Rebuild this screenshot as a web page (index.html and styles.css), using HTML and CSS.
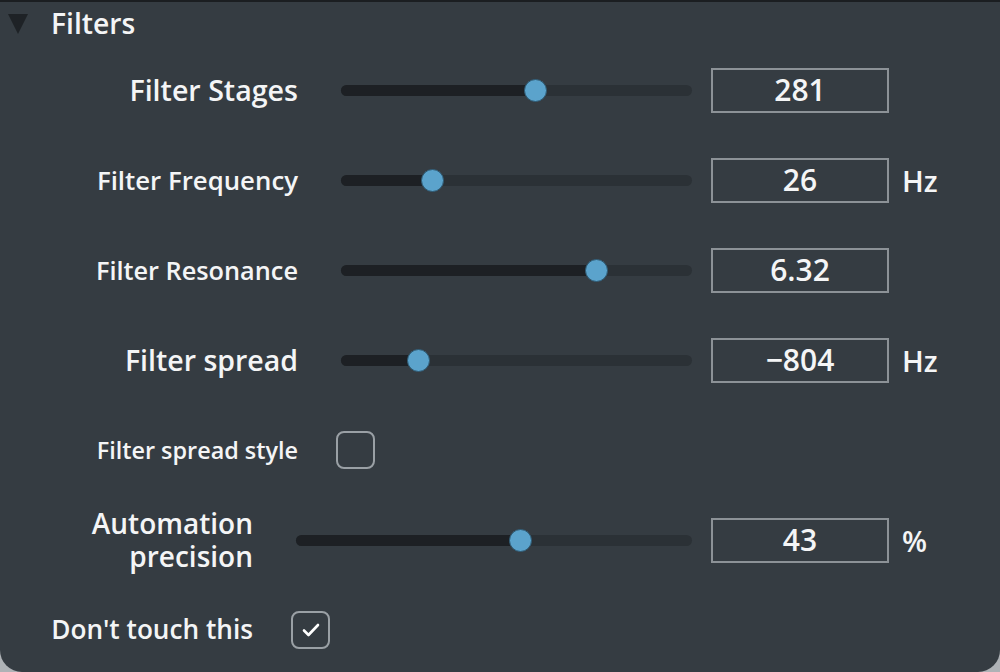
FILE: index.html
```html
<!DOCTYPE html>
<html>
<head>
<meta charset="utf-8">
<link rel="stylesheet" href="styles.css">
</head>
<body>
<div class="panel">
  <div class="header">
    <span class="tri"></span>
    <span class="title">Filters</span>
  </div>

  <div class="row">
    <div class="label l-stages">Filter Stages</div>
    <div class="slider"><div class="fill" style="width:55.3%"></div><div class="thumb" style="left:55.3%"></div></div>
    <div class="value">281</div>
    <div class="unit"></div>
  </div>

  <div class="row">
    <div class="label l-freq">Filter Frequency</div>
    <div class="slider"><div class="fill" style="width:26.2%"></div><div class="thumb" style="left:26.2%"></div></div>
    <div class="value">26</div>
    <div class="unit">Hz</div>
  </div>

  <div class="row">
    <div class="label l-res">Filter Resonance</div>
    <div class="slider"><div class="fill" style="width:72.9%"></div><div class="thumb" style="left:72.9%"></div></div>
    <div class="value">6.32</div>
    <div class="unit"></div>
  </div>

  <div class="row">
    <div class="label l-spread">Filter spread</div>
    <div class="slider"><div class="fill" style="width:22.2%"></div><div class="thumb" style="left:22.2%"></div></div>
    <div class="value">−804</div>
    <div class="unit">Hz</div>
  </div>

  <div class="row">
    <div class="label l-style">Filter spread style</div>
    <div class="check"></div>
  </div>

  <div class="row narrow">
    <div class="label l-auto"><span class="line">Automation</span><span class="line">precision</span></div>
    <div class="slider"><div class="fill" style="width:56.6%"></div><div class="thumb" style="left:56.6%"></div></div>
    <div class="value">43</div>
    <div class="unit">%</div>
  </div>

  <div class="row narrow">
    <div class="label l-touch">Don't touch this</div>
    <div class="check checked">
      <svg width="18" height="14" viewBox="0 0 18 14"><polyline points="2,7.5 6.5,12 16,2" fill="none" stroke="#ffffff" stroke-width="2.6" stroke-linecap="round" stroke-linejoin="round"/></svg>
    </div>
  </div>
</div>
</body>
</html>
```

FILE: styles.css
```css
html, body {
  margin: 0;
  padding: 0;
}
body {
  width: 1000px;
  height: 672px;
  background: #aeb2b6;
  overflow: hidden;
  font-family: "Open Sans", "DejaVu Sans", sans-serif;
  font-weight: 600;
  color: #f4f5f6;
}
.panel {
  box-sizing: border-box;
  width: 1000px;
  height: 672px;
  background: #353c42;
  border-top: 2px solid #1b1e21;
  border-radius: 0 0 22px 22px;
  overflow: hidden;
}
.header {
  height: 43px;
  display: flex;
  align-items: center;
  padding-left: 8px;
}
.tri {
  width: 0;
  height: 0;
  border-left: 10.5px solid transparent;
  border-right: 10.5px solid transparent;
  border-top: 20px solid #1e2226;
  margin-right: 23px;
}
.title {
  font-size: 28.3px;
  line-height: 1;
}
.row {
  height: 90px;
  display: flex;
  align-items: center;
}
.label {
  width: 298px;
  flex: none;
  text-align: right;
  line-height: 1.2;
  white-space: nowrap;
}
.narrow .label {
  width: 253px;
}
.l-stages { font-size: 28.6px; }
.l-freq { font-size: 25.8px; }
.l-res { font-size: 25.3px; }
.l-spread { font-size: 28.5px; }
.l-style { font-size: 23.4px; }
.l-auto {
  font-size: 28px;
  display: flex;
  flex-direction: column;
  align-items: flex-end;
}
.l-auto .line {
  line-height: 33px;
}
.l-touch { font-size: 26.2px; }
.slider {
  position: relative;
  flex: 1;
  height: 11px;
  margin-left: 43px;
  background: #2b3136;
  border-radius: 6px;
}
.fill {
  height: 100%;
  background: #1d2024;
  border-radius: 6px 0 0 6px;
}
.thumb {
  position: absolute;
  top: 50%;
  width: 23px;
  height: 23px;
  margin-left: -11.5px;
  margin-top: -11.5px;
  box-sizing: border-box;
  border-radius: 50%;
  background: #5ba3cc;
  border: 1px solid #2f5a73;
}
.value {
  flex: none;
  box-sizing: border-box;
  width: 178px;
  height: 45px;
  margin-left: 19px;
  border: 2px solid #8c9297;
  display: flex;
  align-items: center;
  justify-content: center;
  font-size: 30px;
  line-height: 1;
}
.unit {
  flex: none;
  width: 111px;
  box-sizing: border-box;
  padding-left: 13px;
  font-size: 29px;
  line-height: 1;
}
.check {
  flex: none;
  box-sizing: border-box;
  width: 39px;
  height: 38px;
  margin-left: 38px;
  border: 2px solid #9aa0a5;
  border-radius: 8px;
  display: flex;
  align-items: center;
  justify-content: center;
}
```
